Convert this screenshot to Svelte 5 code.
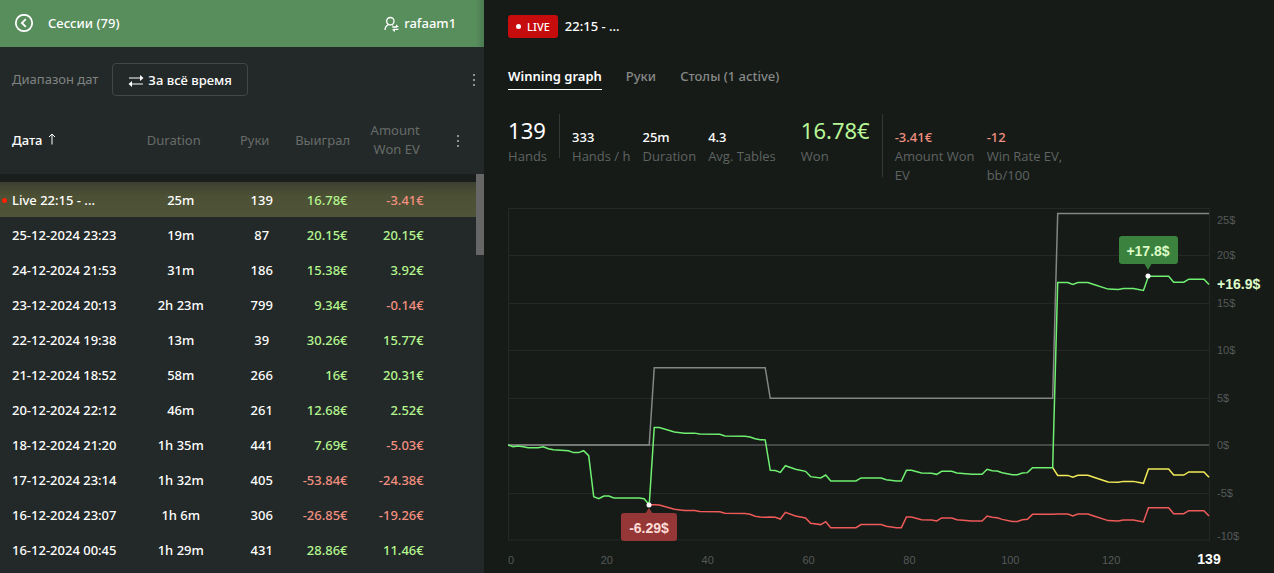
<script lang="ts">
  type Point = [hand: number, value: number];

  const sessions = [
    { date: 'Live 22:15 - ...', duration: '25m', hands: 139, won: '16.78€', ev: '-3.41€', live: true },
    { date: '25-12-2024 23:23', duration: '19m', hands: 87, won: '20.15€', ev: '20.15€' },
    { date: '24-12-2024 21:53', duration: '31m', hands: 186, won: '15.38€', ev: '3.92€' },
    { date: '23-12-2024 20:13', duration: '2h 23m', hands: 799, won: '9.34€', ev: '-0.14€' },
    { date: '22-12-2024 19:38', duration: '13m', hands: 39, won: '30.26€', ev: '15.77€' },
    { date: '21-12-2024 18:52', duration: '58m', hands: 266, won: '16€', ev: '20.31€' },
    { date: '20-12-2024 22:12', duration: '46m', hands: 261, won: '12.68€', ev: '2.52€' },
    { date: '18-12-2024 21:20', duration: '1h 35m', hands: 441, won: '7.69€', ev: '-5.03€' },
    { date: '17-12-2024 23:14', duration: '1h 32m', hands: 405, won: '-53.84€', ev: '-24.38€' },
    { date: '16-12-2024 23:07', duration: '1h 6m', hands: 306, won: '-26.85€', ev: '-19.26€' },
    { date: '16-12-2024 00:45', duration: '1h 29m', hands: 431, won: '28.86€', ev: '11.46€' },
  ];

  const tabs = ['Winning graph', 'Руки', 'Столы (1 active)'];
  let activeTab = $state(0);

  const HANDS = 139;
  const TOP = 8;
  const ZERO = 245;
  const BOTTOM = 340;
  const SCALE = 9.5;
  const AXIS_WIDTH = 65;

  let chartWidth = $state(766);
  const plotWidth = $derived(chartWidth - AXIS_WIDTH);

  const nonShowdown: Point[] = [
    [0, 0], [1, -0.18], [2, -0.1], [3, -0.18], [4, -0.3], [6, -0.3], [7, -0.18], [8, -0.4],
    [9, -0.5], [12, -0.6], [13, -0.8], [14, -0.8], [15, -0.6], [16, -1.12], [17, -5.45],
    [18, -5.65], [19, -5.37], [20, -5.37], [21, -5.58], [26, -5.58], [27, -5.65], [28, -6.29],
    [29, -6.29], [30, -6.31], [33, -6.77], [35, -6.89], [37, -6.89], [38, -6.99], [42, -7.02],
    [43, -7.19], [47, -7.22], [48, -7.3], [49, -7.49], [50, -7.59], [51, -7.6], [52, -7.58],
    [53, -7.6], [54, -7.79], [55, -7.09], [57, -7.47], [59, -7.68], [60, -8.24], [62, -8.38],
    [63, -8.07], [64, -8.7], [69, -8.7], [70, -8.38], [74, -8.38], [75, -8.56], [77, -8.7],
    [78, -8.7], [79, -7.58], [80, -7.58], [82, -7.86], [84, -7.89], [85, -8], [86, -7.68],
    [88, -7.68], [89, -7.86], [92, -8], [94, -8], [95, -7.47], [96, -7.61], [97, -7.65],
    [98, -7.83], [100, -8.05], [101, -8.05], [102, -7.86], [103, -7.82], [104, -7.3],
    [108, -7.3], [109, -7.27], [111, -7.27], [112, -7.47], [113, -7.26], [115, -7.26],
    [116, -7.44], [119, -7.96], [121, -8], [122, -7.9], [124, -7.9], [126, -8.1], [127, -6.6],
    [131, -6.6], [132, -7.23], [134, -7.23], [135, -6.91], [138, -6.91], [139, -7.47],
  ];

  const showdown: Point[] = [
    [0, 0], [28, 0], [29, 8.14], [51, 8.14], [52, 4.91], [108, 4.91], [109, 24.37], [139, 24.37],
  ];

  const showdownAt = (hand: number) => {
    if (hand < 29) return 0;
    if (hand < 52) return 8.14;
    if (hand < 109) return 4.91;
    return 24.37;
  };

  const won: Point[] = nonShowdown.map(([hand, value]) => [hand, value + showdownAt(hand)]);
  const evWon: Point[] = nonShowdown
    .filter(([hand]) => hand >= 108)
    .map(([hand, value]) => [hand, value + (hand === 108 ? 4.91 : 4.07)]);

  const x = (hand: number) => (hand / HANDS) * plotWidth;
  const y = (value: number) => ZERO - value * SCALE;
  const line = (points: Point[]) => points.map(([h, v]) => `${x(h)},${y(v)}`).join(' ');

  const yTicks = [20, 15, 10, 5, 0, -5];
  const xTicks = [20, 40, 60, 80, 100, 120];
</script>

<div class="page">
  <aside>
    <header>
      <button type="button" class="back" aria-label="Назад">
        <svg width="20" height="20" viewBox="0 0 20 20">
          <circle cx="10" cy="9" r="8.2" />
          <path d="M11.8 5.2 7.9 9l3.9 3.8" />
        </svg>
      </button>
      <h1>Сессии (79)</h1>
      <button type="button" class="user">
        <svg width="16" height="16" viewBox="0 0 16 16">
          <circle cx="6.3" cy="5.2" r="3.7" />
          <path d="M1 14c0-2.700 1.300-4.300 3.200-5.200M8.300 8.700l.8.6" />
          <path d="M8.300 11h5M9.500 13.400h5" />
          <path class="head" d="M12 8.200l3 2.800h-3zM10.800 16.200l-3-2.800h3z" />
        </svg>
        rafaam1
      </button>
    </header>

    <div class="range">
      <span>Диапазон дат</span>
      <button type="button" class="period">
        <svg width="16" height="12" viewBox="0 0 16 12">
          <path d="M1 3h12M3 9h12" />
          <path class="head" d="M12 0l3.500 3-3.500 3zM4 6 .5 9 4 12z" />
        </svg>
        За всё время
      </button>
      <button type="button" class="kebab" aria-label="Меню"><i></i><i></i><i></i></button>
    </div>

    <div class="sessions">
      <table>
        <colgroup>
          <col class="c-date" />
          <col class="c-mid" />
          <col class="c-mid" />
          <col class="c-won" />
          <col class="c-ev" />
          <col class="c-menu" />
        </colgroup>
        <thead>
          <tr>
            <th class="date sorted">
              Дата
              <svg width="8" height="12" viewBox="0 0 8 12"><path d="M4 11.500V1M1 4l3-3 3 3" /></svg>
            </th>
            <th>Duration</th>
            <th>Руки</th>
            <th class="num">Выиграл</th>
            <th class="num wrap">Amount Won EV</th>
            <th class="menu">
              <button type="button" class="kebab" aria-label="Столбцы"><i></i><i></i><i></i></button>
            </th>
          </tr>
        </thead>
        <tbody>
          {#each sessions as s}
            <tr class:live={s.live}>
              <td class="date">{s.date}</td>
              <td class="mid">{s.duration}</td>
              <td class="mid">{s.hands}</td>
              <td class="num" class:loss={s.won.startsWith('-')}>{s.won}</td>
              <td class="num" class:loss={s.ev.startsWith('-')}>{s.ev}</td>
              <td></td>
            </tr>
          {/each}
        </tbody>
      </table>
      <div class="thumb"></div>
    </div>
  </aside>

  <main>
    <div class="title">
      <span class="badge">LIVE</span>
      <span>22:15 - ...</span>
    </div>

    <nav>
      {#each tabs as tab, i}
        <button type="button" class:active={activeTab === i} onclick={() => (activeTab = i)}>{tab}</button>
      {/each}
    </nav>

    <div class="stats">
      <dl class="group">
        <div class="stat big"><dt>Hands</dt><dd>139</dd></div>
        <div class="rule"></div>
        <div class="stat"><dt>Hands / h</dt><dd>333</dd></div>
        <div class="stat"><dt>Duration</dt><dd>25m</dd></div>
        <div class="stat"><dt>Avg. Tables</dt><dd>4.3</dd></div>
      </dl>
      <dl class="group">
        <div class="stat big win"><dt>Won</dt><dd>16.78€</dd></div>
        <div class="rule"></div>
        <div class="stat narrow lost"><dt>Amount Won EV</dt><dd>-3.41€</dd></div>
        <div class="stat narrow lost"><dt>Win Rate EV, bb/100</dt><dd>-12</dd></div>
      </dl>
    </div>

    <div class="chart" bind:clientWidth={chartWidth}>
      <svg width={chartWidth} height="373" role="img" aria-label="Winning graph">
        <g class="grid">
          {#each yTicks as tick}
            <line x1="0" x2={plotWidth} y1={Math.round(y(tick)) + 0.5} y2={Math.round(y(tick)) + 0.5} />
          {/each}
          <rect x="0.5" y={TOP + 0.5} width={plotWidth} height={BOTTOM - TOP - 0.5} />
        </g>
        <line class="zero" x1="0" x2={plotWidth} y1={ZERO} y2={ZERO} />

        <polyline class="showdown" points={line(showdown)} />
        <polyline class="non-showdown" points={line(nonShowdown.filter(([h]) => h >= 28))} />
        <polyline class="ev" points={line(evWon)} />
        <polyline class="won" points={line(won)} />

        <g class="ticks">
          <text x={plotWidth + 8} y="24">25$</text>
          {#each yTicks as tick}
            <text x={plotWidth + 8} y={y(tick) + 4}>{tick}$</text>
          {/each}
          <text x={plotWidth + 8} y="340">-10$</text>
          <text x="0" y="364">0</text>
          {#each xTicks as tick}
            <text x={x(tick) - 2} y="364" text-anchor="middle">{tick}</text>
          {/each}
        </g>
        <text class="last" x={plotWidth} y="364" text-anchor="middle">139</text>
        <text class="current" x={plotWidth + 8} y="89">+16.9$</text>

        <g class="tip low" transform="translate({Math.round(x(28))} {Math.round(y(-6.29))})">
          <path d="M-4 9 0 3l4 6z" />
          <rect x="-28" y="8" width="56" height="28" rx="3" />
          <text y="28" text-anchor="middle">-6.29$</text>
          <circle r="2.500" />
        </g>
        <g class="tip high" transform="translate({Math.round(x(127))} {Math.round(y(17.8))})">
          <path d="M-4 -13 0 -6l4 -7z" />
          <rect x="-29" y="-40" width="59" height="28" rx="3" />
          <text y="-20" text-anchor="middle">+17.8$</text>
          <circle r="2.500" />
        </g>
      </svg>
    </div>
  </main>
</div>

<style>
  :global(body) {
    background: #161b18;
  }

  .page {
    display: flex;
    height: 100vh;
    overflow: hidden;
    font-family: 'Segoe UI', 'Noto Sans', 'Open Sans', sans-serif;
    font-size: 13px;
    font-weight: 500;
    line-height: 19px;
    color: #fff;
  }

  button {
    margin: 0;
    padding: 0;
    border: 0;
    background: none;
    color: inherit;
    font: inherit;
    cursor: pointer;
  }

  svg {
    display: block;
    fill: none;
    stroke: currentColor;
  }

  .head {
    fill: currentColor;
    stroke: none;
  }

  aside {
    flex: 0 0 38%;
    display: flex;
    flex-direction: column;
    background: #232928;
  }

  header {
    display: flex;
    align-items: center;
    height: 47px;
    padding: 0 28px 0 14px;
    box-sizing: border-box;
    background: linear-gradient(to left, #4b7a51, #588d5c 8px);
  }

  .back svg {
    stroke-width: 1.8;
  }

  h1 {
    margin: 0 auto 0 14px;
    font-size: 13px;
    font-weight: 500;
  }

  .user {
    display: flex;
    align-items: center;
    gap: 4px;
  }

  .user svg {
    stroke-width: 1.3;
  }

  .range {
    display: flex;
    align-items: center;
    gap: 14px;
    padding: 16px 6px 10px 12px;
    color: #7f8382;
  }

  .range span {
    font-weight: 400;
  }

  .period {
    display: flex;
    align-items: center;
    gap: 4px;
    padding: 7px 15px 5px;
    border: 1px solid #414746;
    border-radius: 4px;
    color: #fff;
  }

  .kebab {
    display: inline-flex;
    flex-direction: column;
    gap: 3px;
    padding: 2px 3px;
    vertical-align: middle;
  }

  .range .kebab {
    margin-left: auto;
  }

  .kebab i {
    width: 2px;
    height: 2px;
    background: #8f9291;
  }

  .sessions {
    position: relative;
    flex: 1;
    min-height: 0;
    overflow: hidden;
  }

  table {
    width: calc(100% - 8px);
    table-layout: fixed;
    border-spacing: 0;
  }

  .c-date { width: 28%; }
  .c-mid { width: 17%; }
  .c-won { width: 11%; }
  .c-ev { width: 16%; }
  .c-menu { width: 11%; }

  thead {
    color: #676c6a;
  }

  th {
    height: 68px;
    padding: 0;
    font-weight: 400;
    border-bottom: 8px solid #1a1e1d;
  }

  th.wrap {
    padding: 0 4px 0 20px;
  }

  th.menu {
    padding-left: 16px;
  }

  .sorted {
    color: #fff;
    font-weight: 500;
  }

  .sorted svg {
    display: inline;
    margin-left: 2px;
  }

  td {
    height: 33px;
    padding: 2px 0 0;
    white-space: nowrap;
  }

  .date {
    padding-left: 12px;
    text-align: left;
  }

  .mid {
    padding-left: 14px;
    text-align: center;
  }

  .num {
    text-align: right;
  }

  td.num {
    color: #b5f58f;
  }

  td.loss {
    color: #f28f80;
  }

  .live {
    background: linear-gradient(#3d4030, #4c5034 40%, #4f5337);
  }

  .live .date {
    position: relative;
  }

  .live .date::before {
    content: '';
    position: absolute;
    left: 2px;
    top: 16px;
    width: 5px;
    height: 5px;
    border-radius: 50%;
    background: #ff2200;
  }

  .thumb {
    position: absolute;
    top: 68px;
    right: 0;
    width: 8px;
    height: 81px;
    background: #666;
  }

  main {
    flex: 1;
    min-width: 0;
    display: flex;
    flex-direction: column;
    padding: 15px 0 0 24px;
  }

  .title {
    display: flex;
    align-items: center;
    gap: 7px;
  }

  .badge {
    display: flex;
    align-items: center;
    gap: 6px;
    padding: 2px 8px;
    border-radius: 3px;
    background: #c60c0c;
    font-size: 11px;
    font-weight: 500;
  }

  .badge::before {
    content: '';
    width: 5px;
    height: 5px;
    border-radius: 50%;
    background: #fff;
  }

  nav {
    display: flex;
    gap: 24px;
    margin-top: 29px;
  }

  nav button {
    padding-bottom: 3px;
    border-bottom: 1px solid transparent;
    color: #868987;
  }

  nav .active {
    border-color: #fff;
    color: #fff;
    font-weight: 600;
  }

  .stats {
    display: flex;
    align-items: flex-start;
    gap: 25px;
    margin-top: 24px;
  }

  .group {
    display: flex;
    gap: 12px;
    margin: 0;
  }

  .stat {
    display: flex;
    flex-direction: column-reverse;
    justify-content: flex-end;
  }

  dt {
    color: #5f6361;
    font-family: 'Segoe UI', 'Open Sans', sans-serif;
    font-weight: 400;
  }

  dd {
    margin: 0;
    padding-top: 14px;
  }

  .big dd {
    padding-top: 0;
    font-size: 22px;
    font-weight: 400;
    line-height: 33px;
  }

  .win dd {
    color: #b9f796;
  }

  .lost dd {
    color: #f28f80;
  }

  .narrow {
    width: 80px;
  }

  .rule {
    width: 1px;
    margin-bottom: 8px;
    background: #333735;
  }

  .chart {
    margin-top: auto;
    min-width: 0;
    font-family: 'Liberation Sans', Arial, sans-serif;
    font-size: 11px;
    font-weight: 400;
  }

  .chart text {
    stroke: none;
  }

  .grid {
    stroke: #242826;
  }

  .zero {
    stroke: #454846;
    stroke-width: 2;
  }

  polyline {
    stroke-width: 1.5;
  }

  .showdown { stroke: #858585; }
  .non-showdown { stroke: #ee5a58; }
  .ev { stroke: #f2ea58; }
  .won { stroke: #70f070; }

  .ticks {
    fill: #555957;
  }

  .last,
  .current,
  .tip text {
    font-size: 14px;
    font-weight: 700;
  }

  .last {
    fill: #fff;
  }

  .current {
    fill: #dcfbc6;
  }

  .tip {
    stroke: none;
  }

  .tip circle {
    fill: #fff;
  }

  .low { fill: #953737; }
  .low text { fill: #ffdcd6; }
  .high { fill: #3a823d; }
  .high text { fill: #dcfbc6; }
</style>
